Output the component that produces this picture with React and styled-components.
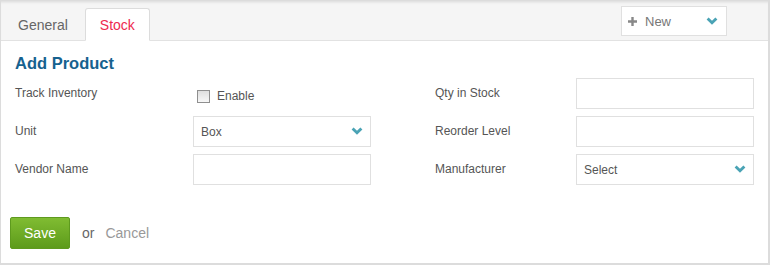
import React from "react";
import styled, { createGlobalStyle } from "styled-components";

const Global = createGlobalStyle`
  html, body { margin: 0; padding: 0; background: #fff; }
  body { font-family: "Liberation Sans", Arial, sans-serif; }
`;

const Card = styled.div`
  width: 770px;
  height: 265px;
  box-sizing: border-box;
  border: 1px solid #dcdcdc;
  border-right-width: 2px;
  border-bottom-width: 2px;
  background: #fff;
  display: flex;
  flex-direction: column;
`;

const Header = styled.div`
  height: 40px;
  box-sizing: border-box;
  background: #f5f5f5;
  border-bottom: 1px solid #e2e2e2;
  box-shadow: inset 0 3px 3px -2px #d8d8d8;
  display: flex;
  align-items: flex-end;
  padding-right: 41px;
`;

const Tab = styled.div`
  height: 33px;
  box-sizing: border-box;
  margin-bottom: -1px;
  padding: 0 ${(p) => (p.$active ? "14px" : "16px")};
  display: flex;
  align-items: center;
  font-size: 14px;
  color: ${(p) => (p.$active ? "#ee2a4f" : "#666")};
  background: ${(p) => (p.$active ? "#fff" : "transparent")};
  border: 1px solid ${(p) => (p.$active ? "#dcdcdc" : "transparent")};
  border-bottom-color: ${(p) => (p.$active ? "#fff" : "transparent")};
  border-radius: 3px 3px 0 0;
`;

const Spacer = styled.div`
  flex: 1;
`;

const NewButton = styled.div`
  align-self: flex-start;
  margin-top: 5px;
  width: 106px;
  height: 30px;
  box-sizing: border-box;
  border: 1px solid #e0e0e0;
  background: #fff;
  display: flex;
  align-items: center;
  padding: 0 8px 0 6px;
  font-size: 13px;
  color: #777;
  svg { flex: none; }
  span { flex: 1; margin-left: 8px; }
`;

const Body = styled.div`
  padding: 12px 14px 0 14px;
`;

const Title = styled.h2`
  margin: 0 0 5px 0;
  font-size: 16.5px;
  font-weight: bold;
  color: #16628f;
  line-height: 20px;
`;

const Grid = styled.div`
  display: grid;
  grid-template-columns: 178px 178px 205px 178px;
  grid-auto-rows: 31px;
  row-gap: 7px;
  align-items: center;
`;

const Label = styled.div`
  font-size: 12px;
  color: #555;
  padding-left: ${(p) => (p.$right ? "64px" : "0")};
  margin-top: -2px;
`;

const Input = styled.div`
  height: 31px;
  box-sizing: border-box;
  border: 1px solid #e0e0e0;
  background: #fff;
  display: flex;
  align-items: center;
  padding: 0 7px;
  font-size: 12px;
  color: #555;
  span { flex: 1; }
`;

const Check = styled.label`
  display: flex;
  align-items: center;
  font-size: 12px;
  color: #555;
  padding-left: 4px;
  margin-top: 5px;
`;

const Box = styled.span`
  width: 11px;
  height: 11px;
  border: 1px solid #8f8f8f;
  background: linear-gradient(#dedede, #f7f7f7);
  margin-right: 7px;
`;

const Actions = styled.div`
  display: flex;
  align-items: center;
  padding: 32px 9px 0 9px;
  font-size: 14px;
`;

const SaveButton = styled.button`
  width: 60px;
  height: 32px;
  border: 1px solid #5e9a1e;
  border-radius: 2px;
  background: linear-gradient(#80bc32, #5d9b1b);
  color: #fff;
  font-family: inherit;
  font-size: 14px;
  padding: 0;
`;

const Or = styled.span`
  color: #666;
  margin-left: 12px;
`;

const Cancel = styled.span`
  color: #999;
  margin-left: 11px;
`;

const Chevron = () => (
  <svg width="12" height="9" viewBox="0 0 12 9">
    <path d="M0.6 2.4 L2.6 0.4 L6 3.8 L9.4 0.4 L11.4 2.4 L6 7.8 Z" fill="#4aa3b5" />
  </svg>
);

const Plus = () => (
  <svg width="9" height="9" viewBox="0 0 9 9">
    <path d="M3.3 0h2.4v3.3H9v2.4H5.7V9H3.3V5.7H0V3.3h3.3z" fill="#888" />
  </svg>
);

export default function App() {
  return (
    <>
      <Global />
      <Card>
        <Header>
          <Tab>General</Tab>
          <Tab $active>Stock</Tab>
          <Spacer />
          <NewButton>
            <Plus />
            <span>New</span>
            <Chevron />
          </NewButton>
        </Header>
        <Body>
          <Title>Add Product</Title>
          <Grid>
            <Label>Track Inventory</Label>
            <Check>
              <Box />
              Enable
            </Check>
            <Label $right>Qty in Stock</Label>
            <Input />

            <Label>Unit</Label>
            <Input>
              <span>Box</span>
              <Chevron />
            </Input>
            <Label $right>Reorder Level</Label>
            <Input />

            <Label>Vendor Name</Label>
            <Input />
            <Label $right>Manufacturer</Label>
            <Input>
              <span>Select</span>
              <Chevron />
            </Input>
          </Grid>
        </Body>
        <Actions>
          <SaveButton>Save</SaveButton>
          <Or>or</Or>
          <Cancel>Cancel</Cancel>
        </Actions>
      </Card>
    </>
  );
}
